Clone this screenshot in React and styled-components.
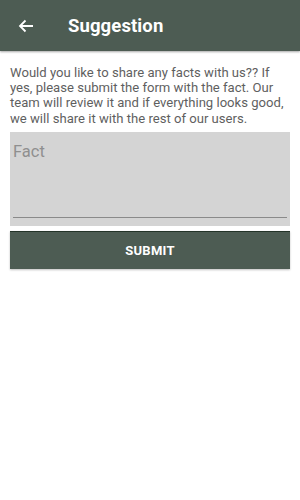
import styled, { createGlobalStyle } from 'styled-components';

const GlobalStyle = createGlobalStyle`
  html, body {
    margin: 0;
    padding: 0;
    background: #ffffff;
    font-family: Roboto, "Noto Sans", sans-serif;
  }
  * {
    box-sizing: border-box;
  }
`;

const Page = styled.div`
  width: 300px;
  min-height: 500px;
  background: #ffffff;
  display: flex;
  flex-direction: column;
`;

const Toolbar = styled.header`
  height: 51px;
  background: #4d5c53;
  display: flex;
  align-items: center;
  padding-left: 16px;
  box-shadow: 0 1px 2px rgba(0, 0, 0, 0.35);
`;

const BackButton = styled.button`
  display: flex;
  align-items: center;
  justify-content: center;
  width: 20px;
  height: 20px;
  padding: 0;
  border: none;
  background: none;
  cursor: pointer;
`;

const Title = styled.h1`
  margin: 0 0 0 32px;
  color: #ffffff;
  font-size: 18.5px;
  font-weight: 700;
  letter-spacing: 0.1px;
`;

const Content = styled.main`
  display: flex;
  flex-direction: column;
  padding: 14px 10px 0 10px;
`;

const Intro = styled.p`
  margin: 0;
  color: #5f5f5f;
  font-size: 13.1px;
  line-height: 15.2px;
`;

const FieldBox = styled.div`
  margin-top: 6px;
  height: 94px;
  background: #d4d4d4;
  padding: 10px 3px 0 3px;
  display: flex;
  flex-direction: column;
`;

const FactInput = styled.textarea`
  flex: 0 0 76px;
  width: 100%;
  resize: none;
  border: none;
  border-bottom: 1.5px solid #8a8a8a;
  background: transparent;
  padding: 0;
  font-family: Roboto, "Noto Sans", sans-serif;
  font-size: 16.5px;
  color: #333;
  outline: none;

  &::placeholder {
    color: #8f8f8f;
  }
`;

const SubmitButton = styled.button`
  margin-top: 5px;
  height: 38px;
  width: 100%;
  border: none;
  border-top: 1px solid #233328;
  background: #4d5c53;
  color: #ffffff;
  font-family: Roboto, "Noto Sans", sans-serif;
  font-size: 13px;
  font-weight: 700;
  letter-spacing: 0.3px;
  box-shadow: 0 1px 2px rgba(0, 0, 0, 0.25);
  cursor: pointer;
`;

const ArrowIcon = () => (
  <svg width="16" height="14" viewBox="0 0 16 14">
    <path
      d="M15 7H2M7.5 1.5L2 7l5.5 5.5"
      fill="none"
      stroke="#ffffff"
      strokeWidth="1.8"
    />
  </svg>
);

const App = () => {
  return (
    <Page>
      <GlobalStyle />
      <Toolbar>
        <BackButton aria-label="Back">
          <ArrowIcon />
        </BackButton>
        <Title>Suggestion</Title>
      </Toolbar>
      <Content>
        <Intro>
          Would you like to share any facts with us?? If yes, please submit the
          form with the fact. Our team will review it and if everything looks
          good, we will share it with the rest of our users.
        </Intro>
        <FieldBox>
          <FactInput placeholder="Fact" />
        </FieldBox>
        <SubmitButton>SUBMIT</SubmitButton>
      </Content>
    </Page>
  );
};

export default App;
